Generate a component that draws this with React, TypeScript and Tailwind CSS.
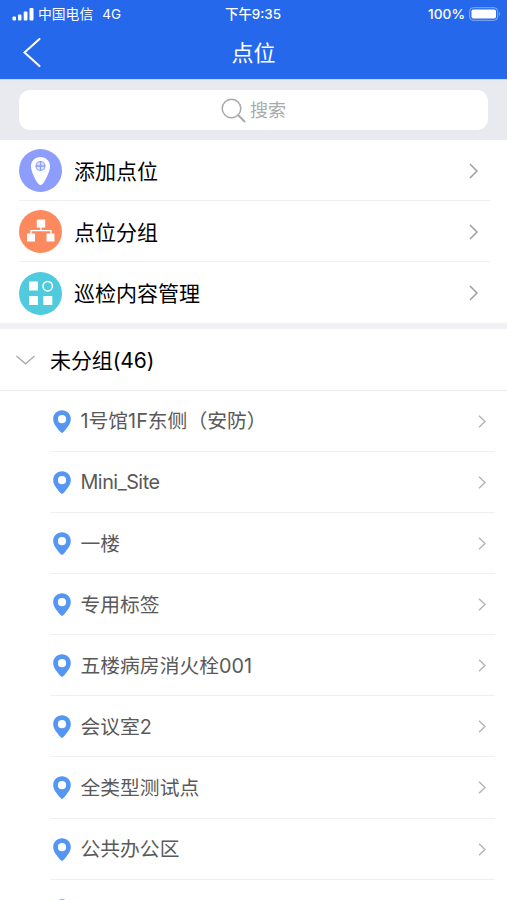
import React, { useState } from 'react';

const POINTS = [
  '1号馆1F东侧（安防）',
  'Mini_Site',
  '一楼',
  '专用标签',
  '五楼病房消火栓001',
  '会议室2',
  '全类型测试点',
  '公共办公区',
  '',
];

function ArrowRight({ small = false }: { small?: boolean }) {
  return small ? (
    <svg className="w-[8px] h-[13px] shrink-0" viewBox="0 0 8 13" fill="none" stroke="#b5b5b5" strokeWidth="1.5">
      <path d="M1 .8 7 6.5 1 12.2" />
    </svg>
  ) : (
    <svg className="w-[9px] h-[16px] shrink-0" viewBox="0 0 9 16" fill="none" stroke="#9d9d9d" strokeWidth="1.5">
      <path d="M1 1 8 8 1 15" />
    </svg>
  );
}

function PinIcon() {
  return (
    <svg className="w-[18px] h-[23px] shrink-0" viewBox="0 0 18 23">
      <path
        fill="#5596f3"
        fillRule="evenodd"
        d="M9 .3C4 .3.2 4.1.2 8.9c0 3.1 1.3 5.4 3.3 8.2 1.4 2 3 4 4.3 5.2.7.7 1.7.7 2.4 0 1.3-1.2 2.9-3.2 4.3-5.2 2-2.8 3.3-5.1 3.3-8.2C17.8 4.1 14 .3 9 .3ZM9 5.1a4.1 4.1 0 1 1 0 8.2 4.1 4.1 0 0 1 0-8.2Z"
      />
    </svg>
  );
}

function AddIcon() {
  return (
    <svg className="w-[43px] h-[43px]" viewBox="0 0 43 43">
      <circle cx="21.5" cy="21.5" r="21.5" fill="#8c9dfb" />
      <path fill="#fff" d="M21.5 8C16 8 12 12 12 17.2c0 3.3 1.6 7.5 3.6 11.5 1.5 3 3 5.4 4.2 6.600 1 1 2.400 1 3.400 0 1.200-1.200 2.700-3.600 4.200-6.600 2-4 3.600-8.200 3.600-11.500C31 12 27 8 21.500 8Z" />
      <circle cx="21.5" cy="17" r="4.5" fill="#dfe4ff" stroke="#8c9dfb" strokeWidth="1.2" />
      <path d="M21.5 12.5v9M17 17h9" stroke="#8c9dfb" strokeWidth="1.3" />
    </svg>
  );
}

function GroupIcon() {
  return (
    <svg className="w-[43px] h-[43px]" viewBox="0 0 43 43">
      <circle cx="21.5" cy="21.5" r="21.5" fill="#fd895f" />
      <path d="M12 24v-3.3h20V24M22 16v5" fill="none" stroke="#fff" strokeWidth="1.3" />
      <g fill="#fff">
        <rect x="17.8" y="9.5" width="8.4" height="8" rx=".6" />
        <rect x="8" y="23.5" width="8" height="8" rx=".6" />
        <rect x="27.5" y="23.5" width="8" height="8" rx=".6" />
      </g>
    </svg>
  );
}

function ContentIcon() {
  return (
    <svg className="w-[43px] h-[43px]" viewBox="0 0 43 43">
      <circle cx="21.5" cy="21.5" r="21.5" fill="#50cbdd" />
      <g fill="#fff">
        <rect x="10" y="9.5" width="9" height="9" rx=".6" />
        <rect x="10" y="24" width="9" height="9" rx=".6" />
        <rect x="24.3" y="24" width="9" height="9" rx=".6" />
      </g>
      <circle cx="28.7" cy="14.2" r="4.7" fill="none" stroke="#fff" strokeWidth="1.5" />
    </svg>
  );
}

const MENU = [
  { label: '添加点位', icon: AddIcon },
  { label: '点位分组', icon: GroupIcon },
  { label: '巡检内容管理', icon: ContentIcon },
];

export default function App() {
  const [open, setOpen] = useState(true);

  return (
    <div className="w-full h-[900px] overflow-hidden flex flex-col bg-white font-['Inter','Noto_Sans_CJK_SC',sans-serif]">
      {/* Status bar + title */}
      <header className="h-[79px] shrink-0 bg-[#2668ec] text-white">
        <div className="h-[28px] grid grid-cols-3 items-center pl-[12px] pr-[6px] text-[13px]">
          <div className="flex items-center">
            <svg className="w-[22px] h-[14px] mr-[4px]" viewBox="0 0 22 14" fill="#fff">
              <rect x=".5" y="9.5" width="3.5" height="4" rx="1" />
              <rect x="6" y="7.5" width="3.5" height="6" rx="1" />
              <rect x="11.7" y="4.5" width="3.8" height="9" rx="1" />
              <rect x="17.5" y="1" width="4" height="12.5" rx="1" />
            </svg>
            <span className="text-[13.8px]">中国电信</span>
            <span className="ml-[9px] pt-px text-[13.5px]">4G</span>
          </div>
          <div className="text-center pt-px pr-[7px] text-[13.4px] font-medium">下午9:35</div>
          <div className="flex items-center justify-end gap-[4px]">
            <span className="text-[13.7px] font-medium">100%</span>
            <svg className="w-[32px] h-[14px]" viewBox="0 0 32 14">
              <rect x=".7" y=".7" width="28" height="12.6" rx="3.5" fill="none" stroke="#fff" strokeOpacity=".45" />
              <rect x="2.5" y="2.5" width="24.5" height="9" rx="1.8" fill="#fff" />
              <path d="M30.3 5v4c1.2-.6 1.2-3.4 0-4Z" fill="#fff" fillOpacity=".5" />
            </svg>
          </div>
        </div>
        <div className="h-[49px] grid grid-cols-3 items-center px-[23px]">
          <button>
            <svg className="w-[18px] h-[29px]" viewBox="0 0 18 29" fill="none" stroke="#fff" strokeWidth="2" strokeLinecap="round">
              <path d="M16.5 1 1.5 14.5 16.5 28" />
            </svg>
          </button>
          <h1 className="text-center text-[22px] leading-none">点位</h1>
        </div>
      </header>

      {/* Search */}
      <div className="h-[61px] shrink-0 bg-[#e9eaf0] border-t border-[#c9d8f6] pt-[10px] px-[19px]">
        <div className="h-[40px] bg-white rounded-[11px] flex items-center justify-center gap-[4px] text-[18px] text-[#aaaaaa]">
          <svg className="w-[25px] h-[25px]" viewBox="0 0 25 25" fill="none" stroke="#a9a9a9" strokeWidth="1.5">
            <circle cx="10.5" cy="10.5" r="9.3" />
            <path d="m17 17 7 7" strokeWidth="2" />
          </svg>
          搜索
        </div>
      </div>

      {/* Menu */}
      <nav className="shrink-0 pl-[19px] pr-[17px] divide-y divide-[#f0f0f2]">
        {MENU.map(({ label, icon: Icon }) => (
          <div key={label} className="h-[61.1px] flex items-center pt-px pr-[12px]">
            <Icon />
            <span className="ml-[12px] pt-[2px] flex-1 text-[21px] text-black">{label}</span>
            <ArrowRight />
          </div>
        ))}
      </nav>
      <div className="h-[6px] shrink-0 bg-[#f1f1f5]" />

      {/* Group */}
      <div
        onClick={() => setOpen(v => !v)}
        className="h-[61.3px] shrink-0 flex items-center pt-px pl-[16px] text-[21px] text-black border-b border-[#ececec]"
      >
        <svg className="w-[19px] h-[10px] mr-[15px]" viewBox="0 0 19 10" fill="none" stroke="#a9a9a9" strokeWidth="1.3">
          <path d="M.5 1 9.5 8.8 18.5 1" />
        </svg>
        <span className="pt-[2px] tracking-[-0.1px]">未分组(46)</span>
      </div>

      {open && (
        <ul className="pl-[50px] pr-[12px]">
          {POINTS.map((name, i) => (
            <li key={i} className="h-[61.15px] flex items-center pt-px pl-[3px] pr-[9px] border-b border-[#f0f0f0]">
              <PinIcon />
              <span
                className={`ml-[9.5px] pt-[2px] flex-1 text-[19.8px] text-[#595959] ${
                  name === 'Mini_Site' ? 'tracking-[-0.5px]' : ''
                }`}
              >
                {name}
              </span>
              <ArrowRight small />
            </li>
          ))}
        </ul>
      )}
    </div>
  );
}
